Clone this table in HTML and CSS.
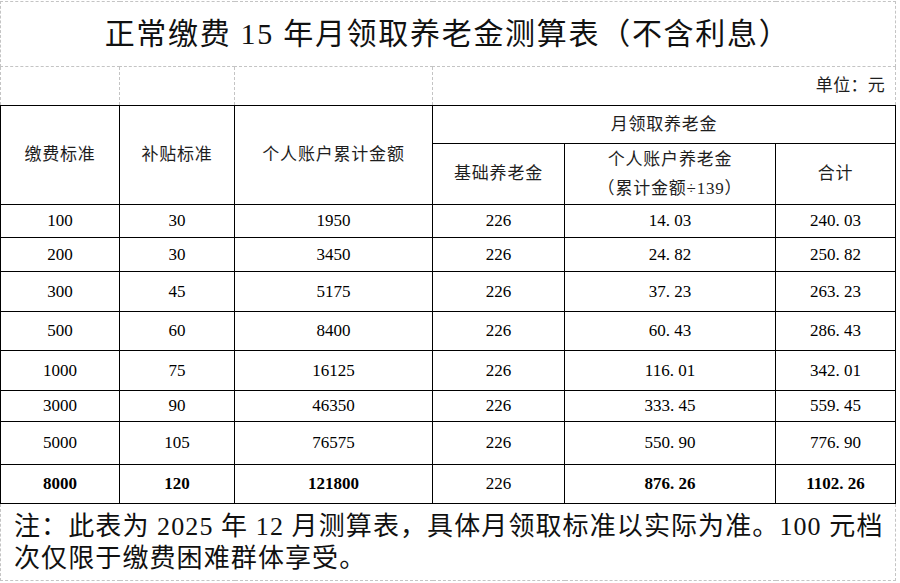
FILE: index.html
```html
<!DOCTYPE html>
<html lang="zh-CN">
<head>
<meta charset="utf-8">
<title>正常缴费 15 年月领取养老金测算表</title>
<link rel="stylesheet" href="styles.css">
</head>
<body>
<table class="sheet">
  <colgroup>
    <col class="c1"><col class="c2"><col class="c3"><col class="c4"><col class="c5"><col class="c6">
  </colgroup>
  <tr class="r-title"><td colspan="6" class="grid title">正常缴费 15 年月领取养老金测算表（不含利息）</td></tr>
  <tr class="r-unit"><td class="grid"></td><td class="grid"></td><td class="grid"></td><td colspan="3" class="grid unit">单位：元</td></tr>
  <tr class="r-h1">
    <th rowspan="2">缴费标准</th>
    <th rowspan="2">补贴标准</th>
    <th rowspan="2">个人账户累计金额</th>
    <th colspan="3">月领取养老金</th>
  </tr>
  <tr class="r-h2">
    <th>基础养老金</th>
    <th class="two">个人账户养老金<br>（累计金额÷139）</th>
    <th>合计</th>
  </tr>
  <tr class="h33"><td>100</td><td>30</td><td>1950</td><td>226</td><td>14<span class="pt">.</span>03</td><td>240<span class="pt">.</span>03</td></tr>
  <tr class="h34"><td>200</td><td>30</td><td>3450</td><td>226</td><td>24<span class="pt">.</span>82</td><td>250<span class="pt">.</span>82</td></tr>
  <tr class="h40"><td>300</td><td>45</td><td>5175</td><td>226</td><td>37<span class="pt">.</span>23</td><td>263<span class="pt">.</span>23</td></tr>
  <tr class="h39"><td>500</td><td>60</td><td>8400</td><td>226</td><td>60<span class="pt">.</span>43</td><td>286<span class="pt">.</span>43</td></tr>
  <tr class="h40"><td>1000</td><td>75</td><td>16125</td><td>226</td><td>116<span class="pt">.</span>01</td><td>342<span class="pt">.</span>01</td></tr>
  <tr class="h31"><td>3000</td><td>90</td><td>46350</td><td>226</td><td>333<span class="pt">.</span>45</td><td>559<span class="pt">.</span>45</td></tr>
  <tr class="h43"><td>5000</td><td>105</td><td>76575</td><td>226</td><td>550<span class="pt">.</span>90</td><td>776<span class="pt">.</span>90</td></tr>
  <tr class="h39 strong"><td>8000</td><td>120</td><td>121800</td><td class="plain">226</td><td>876<span class="pt">.</span>26</td><td>1102<span class="pt">.</span>26</td></tr>
  <tr class="r-note"><td colspan="6" class="grid note">注：此表为 2025 年 12 月测算表，具体月领取标准以实际为准。100 元档次仅限于缴费困难群体享受。</td></tr>
</table>
</body>
</html>
```

FILE: styles.css
```css
html, body {
  margin: 0;
  padding: 0;
  background: #fff;
}
body {
  font-family: "Liberation Serif", "Noto Sans CJK SC", serif;
  color: #000;
}
.sheet {
  border-collapse: collapse;
  table-layout: fixed;
  width: 896px;
  margin-top: 1px;
}
.c1 { width: 119px; }
.c2 { width: 115px; }
.c3 { width: 198px; }
.c4 { width: 132px; }
.c5 { width: 211px; }
.c6 { width: 120px; }

.sheet td, .sheet th {
  border: 1px solid #000;
  padding: 0;
  text-align: center;
  vertical-align: middle;
  font-size: 17px;
  font-weight: normal;
  line-height: 20px;
  white-space: nowrap;
}
.sheet th {
  font-size: 17px;
  letter-spacing: 0.8px;
  color: #1e1e1e;
}
.sheet td.grid {
  border: 1px dashed #c4c4c4;
}
.r-title { height: 65px; }
.r-unit { height: 39px; }
.r-h1 { height: 38px; }
.r-h2 { height: 61px; }
.h31 { height: 31px; }
.h33 { height: 33px; }
.h34 { height: 34px; }
.h39 { height: 39px; }
.h40 { height: 40px; }
.h43 { height: 43px; }
.r-note { height: 77px; }

.title {
  font-size: 30px !important;
  letter-spacing: 1.7px;
  line-height: 40px !important;
  color: #111;
  padding-right: 1px !important;
}
.unit {
  text-align: right !important;
  padding-right: 10px !important;
  letter-spacing: 0.3px;
  color: #1e1e1e;
}
.two {
  line-height: 29px !important;
}
.strong td {
  font-weight: bold;
}
.strong td.plain {
  font-weight: normal;
}
.pt {
  display: inline-block;
  width: 0.5em;
  text-align: left;
}
.note {
  text-align: left !important;
  vertical-align: top !important;
  white-space: normal !important;
  font-size: 26px !important;
  line-height: 32px !important;
  letter-spacing: 1.1px;
  padding: 7px 4px 0 13px !important;
  color: #111;
}
```
